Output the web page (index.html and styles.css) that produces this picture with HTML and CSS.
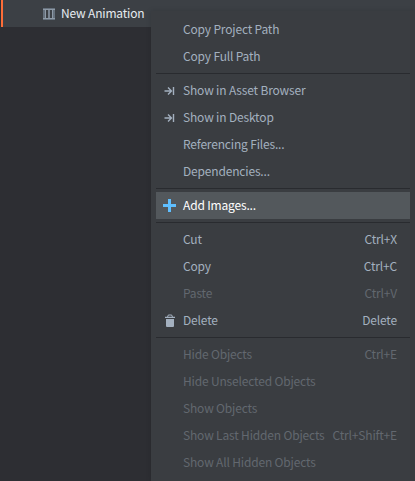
FILE: index.html
```html
<!DOCTYPE html>
<html lang="en">
<head>
<meta charset="utf-8">
<title>Assets</title>
<link rel="stylesheet" href="styles.css">
</head>
<body>
<div class="tree-row">
  <svg class="film" width="12" height="12" viewBox="0 0 12 12"><path class="film-edge" d="M0 0h12v2H0zM0 10h12v2H0zM0 2h3v8H0zM9 2h3v8H9zM5 2h2v8H5z"/><path class="film-bar" d="M0 1h12v1H0zM0 10h12v1H0zM2 2h1v8H2zM9 2h1v8H9zM5.500 2h1v8h-1z"/></svg>
  <span class="label">New Animation</span>
</div>
<div class="menu">
  <div class="item"><span class="label">Copy Project Path</span></div>
  <div class="item"><span class="label">Copy Full Path</span></div>
  <hr>
  <div class="item"><svg class="icon" width="14" height="14" viewBox="0 0 14 14"><path class="line" d="M1.500 8h7M5 4.500L8.500 8 5 11.500M10.500 4v8"/></svg><span class="label">Show in Asset Browser</span></div>
  <div class="item"><svg class="icon" width="14" height="14" viewBox="0 0 14 14"><path class="line" d="M1.500 8h7M5 4.500L8.500 8 5 11.500M10.500 4v8"/></svg><span class="label">Show in Desktop</span></div>
  <div class="item"><span class="label">Referencing Files...</span></div>
  <div class="item"><span class="label">Dependencies...</span></div>
  <hr>
  <div class="item active"><svg class="icon" width="14" height="14" viewBox="0 0 14 14"><path class="plus" d="M5 1h3v5h5v3H8v5H5V9H0V6h5z"/></svg><span class="label">Add Images...</span></div>
  <hr>
  <div class="item"><span class="label">Cut</span><span class="key">Ctrl+X</span></div>
  <div class="item"><span class="label">Copy</span><span class="key">Ctrl+C</span></div>
  <div class="item disabled"><span class="label">Paste</span><span class="key">Ctrl+V</span></div>
  <div class="item"><svg class="icon" width="14" height="14" viewBox="0 0 14 14"><path class="solid" d="M2 3.700h10V5H2zM3 6h8v7q0 1-1 1H4q-1 0-1-1zM4.200 4V3l1.300-1.400h3L9.800 3v1h-1V3.200L8.200 2.600H5.800L5.200 3.200V4z"/></svg><span class="label">Delete</span><span class="key">Delete</span></div>
  <hr>
  <div class="item disabled"><span class="label">Hide Objects</span><span class="key">Ctrl+E</span></div>
  <div class="item disabled"><span class="label">Hide Unselected Objects</span></div>
  <div class="item disabled"><span class="label">Show Objects</span></div>
  <div class="item disabled"><span class="label">Show Last Hidden Objects</span><span class="key">Ctrl+Shift+E</span></div>
  <div class="item disabled"><span class="label">Show All Hidden Objects</span></div>
</div>
</body>
</html>
```
FILE: styles.css
```css
* { box-sizing: border-box; }
body {
  margin: 0;
  height: 481px;
  overflow: hidden;
  background: #2d2e33;
  font: 12px/26px "Noto Sans CJK SC", "Noto Sans", sans-serif;
  letter-spacing: -0.17px;
  color: #a3b0bf;
  white-space: nowrap;
}
.tree-row {
  display: flex;
  height: 27px;
  margin-left: 1px;
  padding-left: 40px;
  border-left: 2px solid #fd6d38;
  background: #3c4045;
  color: #e6ebf0;
}
.film { margin: 8px 6px 0 0; }
.film-edge { fill: #66717d; }
.film-bar { fill: #8e9aa7; }
.menu {
  position: absolute;
  left: 151px;
  top: 11px;
  width: 264px;
  height: 470px;
  padding: 5px 5px 0;
  background: #3a3d41;
  box-shadow: 0 0 5px rgba(0, 0, 0, .15);
}
.item {
  position: relative;
  display: flex;
  justify-content: space-between;
  height: 27px;
  padding: 0 13px 0 27px;
}
.icon {
  position: absolute;
  left: 7px;
  top: 6px;
}
.line { fill: none; stroke: #a3b0bf; stroke-width: 1.4; }
.solid { fill: #a3b0bf; }
.plus { fill: #5fbfff; }
.active { background: #53585c; color: #fff; }
.disabled { color: #62686f; }
hr {
  height: 1px;
  margin: 3px 0;
  border: 0;
  background: #292b2f;
}
```
